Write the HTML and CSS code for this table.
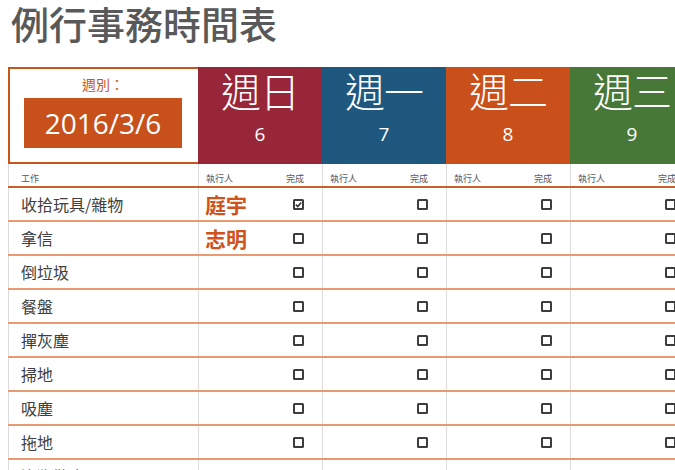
FILE: index.html
```html
<!DOCTYPE html>
<html lang="zh-Hant">
<head>
<meta charset="utf-8">
<title>例行事務時間表</title>
<link rel="stylesheet" href="styles.css">
</head>
<body>
<h1 class="title">例行事務時間表</h1>
<div class="sheet">
  <div class="row head">
    <div class="week-cell">
      <div class="week-label">週別：</div>
      <div class="week-date">2016/3/6</div>
    </div>
    <div class="day sun"><div class="day-name">週日</div><div class="day-num">6</div></div>
    <div class="day mon"><div class="day-name">週一</div><div class="day-num">7</div></div>
    <div class="day tue"><div class="day-name">週二</div><div class="day-num">8</div></div>
    <div class="day wed"><div class="day-name">週三</div><div class="day-num">9</div></div>
  </div>
  <div class="row sub">
    <div class="task">工作</div>
    <div class="who">執行人</div><div class="done">完成</div>
    <div class="who">執行人</div><div class="done">完成</div>
    <div class="who">執行人</div><div class="done">完成</div>
    <div class="who">執行人</div><div class="done">完成</div>
  </div>
  <div class="row item">
    <div class="task">收拾玩具/雜物</div>
    <div class="who">庭宇</div><div class="done"><span class="box checked"><svg viewBox="0 0 10 10" width="7" height="7"><path d="M1.2 5.2 L4 8 L8.8 2" fill="none" stroke="#333" stroke-width="2.2"/></svg></span></div>
    <div class="who"></div><div class="done"><span class="box"></span></div>
    <div class="who"></div><div class="done"><span class="box"></span></div>
    <div class="who"></div><div class="done"><span class="box"></span></div>
  </div>
  <div class="row item">
    <div class="task">拿信</div>
    <div class="who">志明</div><div class="done"><span class="box"></span></div>
    <div class="who"></div><div class="done"><span class="box"></span></div>
    <div class="who"></div><div class="done"><span class="box"></span></div>
    <div class="who"></div><div class="done"><span class="box"></span></div>
  </div>
  <div class="row item">
    <div class="task">倒垃圾</div>
    <div class="who"></div><div class="done"><span class="box"></span></div>
    <div class="who"></div><div class="done"><span class="box"></span></div>
    <div class="who"></div><div class="done"><span class="box"></span></div>
    <div class="who"></div><div class="done"><span class="box"></span></div>
  </div>
  <div class="row item">
    <div class="task">餐盤</div>
    <div class="who"></div><div class="done"><span class="box"></span></div>
    <div class="who"></div><div class="done"><span class="box"></span></div>
    <div class="who"></div><div class="done"><span class="box"></span></div>
    <div class="who"></div><div class="done"><span class="box"></span></div>
  </div>
  <div class="row item">
    <div class="task">撣灰塵</div>
    <div class="who"></div><div class="done"><span class="box"></span></div>
    <div class="who"></div><div class="done"><span class="box"></span></div>
    <div class="who"></div><div class="done"><span class="box"></span></div>
    <div class="who"></div><div class="done"><span class="box"></span></div>
  </div>
  <div class="row item">
    <div class="task">掃地</div>
    <div class="who"></div><div class="done"><span class="box"></span></div>
    <div class="who"></div><div class="done"><span class="box"></span></div>
    <div class="who"></div><div class="done"><span class="box"></span></div>
    <div class="who"></div><div class="done"><span class="box"></span></div>
  </div>
  <div class="row item">
    <div class="task">吸塵</div>
    <div class="who"></div><div class="done"><span class="box"></span></div>
    <div class="who"></div><div class="done"><span class="box"></span></div>
    <div class="who"></div><div class="done"><span class="box"></span></div>
    <div class="who"></div><div class="done"><span class="box"></span></div>
  </div>
  <div class="row item">
    <div class="task">拖地</div>
    <div class="who"></div><div class="done"><span class="box"></span></div>
    <div class="who"></div><div class="done"><span class="box"></span></div>
    <div class="who"></div><div class="done"><span class="box"></span></div>
    <div class="who"></div><div class="done"><span class="box"></span></div>
  </div>
  <div class="row item">
    <div class="task">遛狗散步</div>
    <div class="who"></div><div class="done"><span class="box"></span></div>
    <div class="who"></div><div class="done"><span class="box"></span></div>
    <div class="who"></div><div class="done"><span class="box"></span></div>
    <div class="who"></div><div class="done"><span class="box"></span></div>
  </div>
</div>
</body>
</html>
```

FILE: styles.css
```css
html, body {
  margin: 0;
  padding: 0;
  overflow: hidden;
  width: 675px;
  height: 470px;
  background: #ffffff;
}
body {
  font-family: "Noto Sans CJK TC", "Noto Sans", sans-serif;
  color: #404040;
}
.title {
  margin: 0 0 21px 0;
  padding-left: 11px;
  font-size: 38px;
  line-height: 46px;
  font-weight: 500;
  color: #595959;
  white-space: nowrap;
}
.sheet {
  margin-left: 8px;
  width: 686px;
}
.row {
  display: grid;
  grid-template-columns: 190px repeat(4, 74px 50px);
}
.head {
  height: 97px;
}
.week-cell {
  border: 2px solid #c8561b;
  border-right: none;
  padding-right: 2px;
  display: flex;
  flex-direction: column;
  align-items: center;
  padding-top: 5px;
}
.week-label {
  font-size: 14px;
  line-height: 20px;
  color: #c8561b;
}
.week-date {
  margin-top: 4px;
  width: 158px;
  height: 50px;
  background: #c8501a;
  color: #ffffff;
  font-family: "Open Sans", "Noto Sans", sans-serif;
  font-size: 28px;
  line-height: 50px;
  text-align: center;
}
.day {
  grid-column: span 2;
  color: #ffffff;
  text-align: center;
}
.sun { background: #982639; }
.mon { background: #1f587f; }
.tue { background: #c9501a; }
.wed { background: #487838; }
.day-name {
  font-size: 40px;
  line-height: 46px;
  font-weight: 300;
  letter-spacing: -1px;
}
.day-num {
  margin-top: 9px;
  font-family: "Open Sans", "Noto Sans", sans-serif;
  font-size: 19px;
  line-height: 24px;
}
.sub {
  height: 22px;
  border-bottom: 2px solid #c8622a;
  font-size: 9px;
  color: #595959;
}
.sub > div {
  display: flex;
  align-items: center;
  padding-top: 6px;
}
.sub .task { padding-left: 12px; border-left: 1px solid #dcdcdc; }
.sub .who { padding-left: 7px; border-left: 1px solid #dcdcdc; }
.sub .done { justify-content: center; padding-right: 4px; }
.item {
  height: 32px;
  border-bottom: 2px solid #e99a70;
}
.item > div {
  display: flex;
  align-items: center;
}
.item .task {
  padding-left: 12px;
  border-left: 1px solid #dcdcdc;
  font-size: 16px;
  color: #404040;
  white-space: nowrap;
}
.item .who {
  padding-left: 6px;
  border-left: 1px solid #dcdcdc;
  font-size: 21px;
  font-weight: 700;
  color: #d0521c;
}
.item .done {
  justify-content: center;
  padding-left: 2px;
}
.box {
  box-sizing: border-box;
  width: 11px;
  height: 11px;
  border: 2px solid #3d3d3d;
  border-radius: 1.5px;
  display: flex;
  align-items: center;
  justify-content: center;
}
.box svg {
  display: block;
}
```
